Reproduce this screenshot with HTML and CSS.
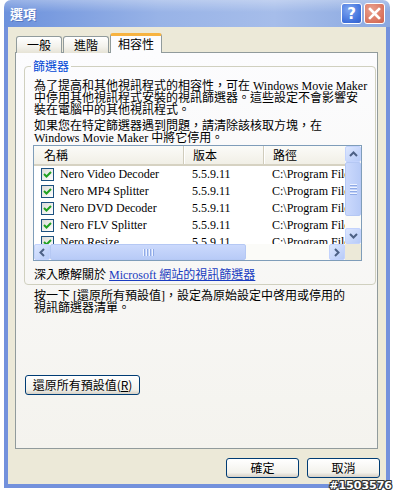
FILE: index.html
```html
<!DOCTYPE html>
<html lang="zh-Hant">
<head>
  <meta charset="UTF-8" />
  <title>選項</title>
  <link rel="stylesheet" href="styles.css">
</head>
<body>
  <div class="window">
    <div class="titlebar">
      <span class="title">選項</span>
      <div class="title-buttons">
        <span class="tb-btn help">?</span>
        <span class="tb-btn close">
          <svg width="13" height="13" viewBox="0 0 13 13"><path d="M2 2 L11 11 M11 2 L2 11" stroke="#fff" stroke-width="2.6" stroke-linecap="square"/></svg>
        </span>
      </div>
    </div>

    <div class="frame">
      <div class="tabs">
        <div class="tab">一般</div>
        <div class="tab">進階</div>
        <div class="tab active">相容性</div>
      </div>

      <div class="panel">
        <fieldset class="group">
          <legend>篩選器</legend>
          <p class="intro">為了提高和其他視訊程式的相容性，可在 Windows Movie Maker<br>中停用其他視訊程式安裝的視訊篩選器。這些設定不會影響安<br>裝在電腦中的其他視訊程式。</p>
          <p class="intro second">如果您在特定篩選器遇到問題，請清除該核取方塊，在<br>Windows Movie Maker 中將它停用。</p>

          <div class="listview">
            <div class="lv-body">
              <div class="lv-header">
                <div class="col name">名稱</div>
                <div class="col ver">版本</div>
                <div class="col path">路徑</div>
              </div>
              <div class="lv-row">
                <div class="col name"><span class="check"><svg width="11" height="11" viewBox="0 0 11 11"><path d="M2 5 L4.5 7.5 L9 3" fill="none" stroke="#21a121" stroke-width="2"/></svg></span>Nero Video Decoder</div>
                <div class="col ver">5.5.9.11</div>
                <div class="col path">C:\Program Files\Nero</div>
              </div>
              <div class="lv-row">
                <div class="col name"><span class="check"><svg width="11" height="11" viewBox="0 0 11 11"><path d="M2 5 L4.5 7.5 L9 3" fill="none" stroke="#21a121" stroke-width="2"/></svg></span>Nero MP4 Splitter</div>
                <div class="col ver">5.5.9.11</div>
                <div class="col path">C:\Program Files\Nero</div>
              </div>
              <div class="lv-row">
                <div class="col name"><span class="check"><svg width="11" height="11" viewBox="0 0 11 11"><path d="M2 5 L4.5 7.5 L9 3" fill="none" stroke="#21a121" stroke-width="2"/></svg></span>Nero DVD Decoder</div>
                <div class="col ver">5.5.9.11</div>
                <div class="col path">C:\Program Files\Nero</div>
              </div>
              <div class="lv-row">
                <div class="col name"><span class="check"><svg width="11" height="11" viewBox="0 0 11 11"><path d="M2 5 L4.5 7.5 L9 3" fill="none" stroke="#21a121" stroke-width="2"/></svg></span>Nero FLV Splitter</div>
                <div class="col ver">5.5.9.11</div>
                <div class="col path">C:\Program Files\Nero</div>
              </div>
              <div class="lv-row">
                <div class="col name"><span class="check"><svg width="11" height="11" viewBox="0 0 11 11"><path d="M2 5 L4.5 7.5 L9 3" fill="none" stroke="#21a121" stroke-width="2"/></svg></span>Nero Resize</div>
                <div class="col ver">5.5.9.11</div>
                <div class="col path">C:\Program Files\Nero</div>
              </div>
            </div>

            <div class="vscroll">
              <span class="sb-btn"><svg width="9" height="6" viewBox="0 0 9 6"><path d="M1 5 L4.5 1.5 L8 5" fill="none" stroke="#4d6185" stroke-width="2"/></svg></span>
              <span class="sb-thumb v"><i></i><i></i><i></i><i></i></span>
              <span class="sb-track"></span>
              <span class="sb-btn"><svg width="9" height="6" viewBox="0 0 9 6"><path d="M1 1 L4.5 4.5 L8 1" fill="none" stroke="#4d6185" stroke-width="2"/></svg></span>
            </div>

            <div class="hscroll">
              <span class="sb-btn"><svg width="6" height="9" viewBox="0 0 6 9"><path d="M5 1 L1.5 4.5 L5 8" fill="none" stroke="#4d6185" stroke-width="2"/></svg></span>
              <span class="sb-thumb h"><i></i><i></i><i></i><i></i></span>
              <span class="sb-track"></span>
              <span class="sb-btn"><svg width="6" height="9" viewBox="0 0 6 9"><path d="M1 1 L4.5 4.5 L1 8" fill="none" stroke="#4d6185" stroke-width="2"/></svg></span>
            </div>
            <div class="corner"></div>
          </div>

          <p class="more">深入瞭解關於 <a href="#">Microsoft 網站的視訊篩選器</a></p>
        </fieldset>

        <p class="note">按一下 [還原所有預設值]，設定為原始設定中啓用或停用的<br>視訊篩選器清單。</p>

        <button class="btn reset">還原所有預設值(<u>R</u>)</button>
      </div>

      <div class="dialog-buttons">
        <button class="btn">確定</button>
        <button class="btn">取消</button>
      </div>
    </div>
  </div>

  <div class="watermark">#1503576</div>
</body>
</html>
```

FILE: styles.css
```css
* {
  margin: 0;
  padding: 0;
  box-sizing: border-box;
}

body {
  position: relative;
  width: 395px;
  height: 492px;
  overflow: hidden;
  background: #fff;
  font-family: "Liberation Serif", "Noto Sans CJK TC", serif;
  font-size: 12px;
  line-height: 12px;
  color: #000;
}

.window {
  margin-left: 4px;
  width: 386px;
}

/* Title bar */
.titlebar {
  height: 27px;
  border-radius: 7px 7px 0 0;
  background:
    linear-gradient(to bottom, rgba(255, 255, 255, 0.3), rgba(255, 255, 255, 0) 45%),
    linear-gradient(to right, #6c91dc, #98b3e7 40%, #a6bdea 70%, #8aa8e0);
  display: flex;
  align-items: center;
  justify-content: space-between;
  padding: 0 5px 0 6px;
}

.title {
  font-family: "Noto Sans CJK TC", sans-serif;
  font-weight: bold;
  font-size: 13px;
  color: #fff;
  text-shadow: 1px 1px 0 rgba(40, 70, 150, 0.4);
}

.title-buttons {
  display: flex;
  gap: 2px;
}

.tb-btn {
  width: 21px;
  height: 21px;
  border: 1px solid #fff;
  border-radius: 3px;
  display: flex;
  align-items: center;
  justify-content: center;
  color: #fff;
  font-family: "DejaVu Sans", sans-serif;
  font-weight: bold;
  font-size: 15px;
}

.tb-btn.help {
  background: radial-gradient(circle at 35% 30%, #7fa6f0, #3f70dc 70%, #3760c6);
}

.tb-btn.close {
  background: radial-gradient(circle at 35% 30%, #eaa08e, #d9735d 70%, #c9614c);
}

/* Frame */
.frame {
  height: 461px;
  background: #ece9d8;
  border: 4px solid #7391dc;
  border-top: 0;
  padding: 6px 8px 0 7px;
}

.tabs {
  display: flex;
  align-items: flex-end;
  height: 20px;
  margin-bottom: -1px;
  position: relative;
  z-index: 1;
}

.tab {
  width: 46px;
  height: 17px;
  margin-left: 1px;
  border: 1px solid #919b9c;
  border-bottom: 0;
  border-radius: 3px 3px 0 0;
  background: linear-gradient(to bottom, #fff, #f3f2ec 60%, #e6e3d6);
  font-family: "Noto Sans CJK TC", sans-serif;
  font-size: 12px;
  line-height: 16px;
  text-align: center;
}

.tab.active {
  width: 52px;
  height: 20px;
  margin-left: 1px;
  background: #fcfcfe;
  border-top: 3px solid #f7b340;
  line-height: 15px;
}

.panel {
  height: 397px;
  border: 1px solid #919b9c;
  background: linear-gradient(to bottom, #fcfcfe, #f4f3ee);
  padding-top: 7px;
}

/* Group box */
.group {
  margin: 0 7px 0 8px;
  border: 1px solid #d0d0bf;
  border-radius: 4px;
  padding: 8px 8px 3px 9px;
}

.group legend {
  margin-left: -3px;
  padding: 0 2px;
  color: #0046d5;
  font-family: "Noto Sans CJK TC", sans-serif;
  line-height: 12px;
}

.intro {
  white-space: nowrap;
}

.intro.second {
  margin-top: 4px;
}

/* List view */
.listview {
  margin: 1px 0 0 -1px;
  width: 329px;
  height: 116px;
  border: 1px solid #7f9db9;
  background: #fff;
  display: grid;
  grid-template-columns: 311px 16px;
  grid-template-rows: 98px 16px;
}

.lv-body {
  overflow: hidden;
  white-space: nowrap;
}

.lv-header,
.lv-row {
  display: flex;
}

.lv-header {
  height: 20px;
  background: linear-gradient(to bottom, #fbfbf8, #f1efe6);
  border-bottom: 2px solid #d6d2c2;
  font-family: "Noto Sans CJK TC", sans-serif;
  line-height: 18px;
}

.col {
  flex: none;
  overflow: hidden;
}

.col.name {
  width: 149px;
  padding-left: 10px;
}

.col.ver {
  width: 80px;
  padding-left: 9px;
}

.col.path {
  width: 100px;
  padding-left: 9px;
}

.lv-header .col.ver,
.lv-header .col.path {
  border-left: 1px solid #d0ccbc;
  box-shadow: inset 1px 0 0 #fff;
}

.lv-row {
  height: 17px;
  line-height: 17px;
}

.lv-row .col.name {
  padding-left: 7px;
  display: flex;
  align-items: center;
}

.check {
  flex: none;
  width: 13px;
  height: 13px;
  margin-right: 6px;
  border: 1px solid #1c5180;
  background: linear-gradient(135deg, #dcdcd7, #fff);
  display: flex;
  align-items: center;
  justify-content: center;
}

/* Scrollbars */
.vscroll,
.hscroll {
  display: flex;
  background: #fbfbf8;
}

.vscroll {
  grid-row: 1 / 2;
  grid-column: 2;
  flex-direction: column;
}

.hscroll {
  grid-row: 2;
  grid-column: 1;
}

.corner {
  background: #ece9d8;
}

.sb-btn {
  flex: none;
  width: 16px;
  height: 16px;
  border: 1px solid #c3d3fd;
  border-radius: 2px;
  background: linear-gradient(135deg, #dde7fe, #b7cbf8);
  display: flex;
  align-items: center;
  justify-content: center;
}

.sb-track {
  flex: 1;
}

.sb-thumb {
  flex: none;
  border: 1px solid #b5c8f4;
  border-radius: 2px;
  display: flex;
  align-items: center;
  justify-content: center;
  gap: 1px;
}

.sb-thumb.v {
  height: 54px;
  flex-direction: column;
  background: linear-gradient(to right, #cbd9fc, #b8cbf7);
}

.sb-thumb.h {
  width: 196px;
  background: linear-gradient(to bottom, #cbd9fc, #b8cbf7);
}

.sb-thumb i {
  display: block;
  background: #eef3fe;
}

.sb-thumb.v i {
  width: 7px;
  height: 2px;
  border-bottom: 1px solid #8faae6;
}

.sb-thumb.h i {
  width: 2px;
  height: 7px;
  border-right: 1px solid #8faae6;
}

.more {
  margin-top: 8px;
  white-space: nowrap;
}

.more a {
  color: #1a3cc0;
}

.note {
  margin: 5px 0 0 18px;
  white-space: nowrap;
}

/* Buttons */
.btn {
  height: 20px;
  border: 1px solid #003c74;
  border-radius: 3px;
  background: linear-gradient(to bottom, #fff, #f3f2ec 75%, #d6d0c5);
  font-family: "Noto Sans CJK TC", sans-serif;
  font-size: 12px;
  line-height: 16px;
  color: #000;
}

.reset {
  margin: 61px 0 0 9px;
  width: 115px;
}

.dialog-buttons {
  display: flex;
  justify-content: flex-end;
  gap: 8px;
  margin: 9px -2px 0 0;
}

.dialog-buttons .btn {
  width: 73px;
}

.watermark {
  position: absolute;
  right: 3px;
  bottom: 0;
  font-family: "DejaVu Sans", sans-serif;
  font-weight: bold;
  font-size: 11px;
  line-height: 13px;
  color: #fff;
  text-shadow: 1px 0 0 #333, -1px 0 0 #333, 0 1px 0 #333, 0 -1px 0 #333,
    1px 1px 0 #333, -1px -1px 0 #333, 1px -1px 0 #333, -1px 1px 0 #333;
}
```
